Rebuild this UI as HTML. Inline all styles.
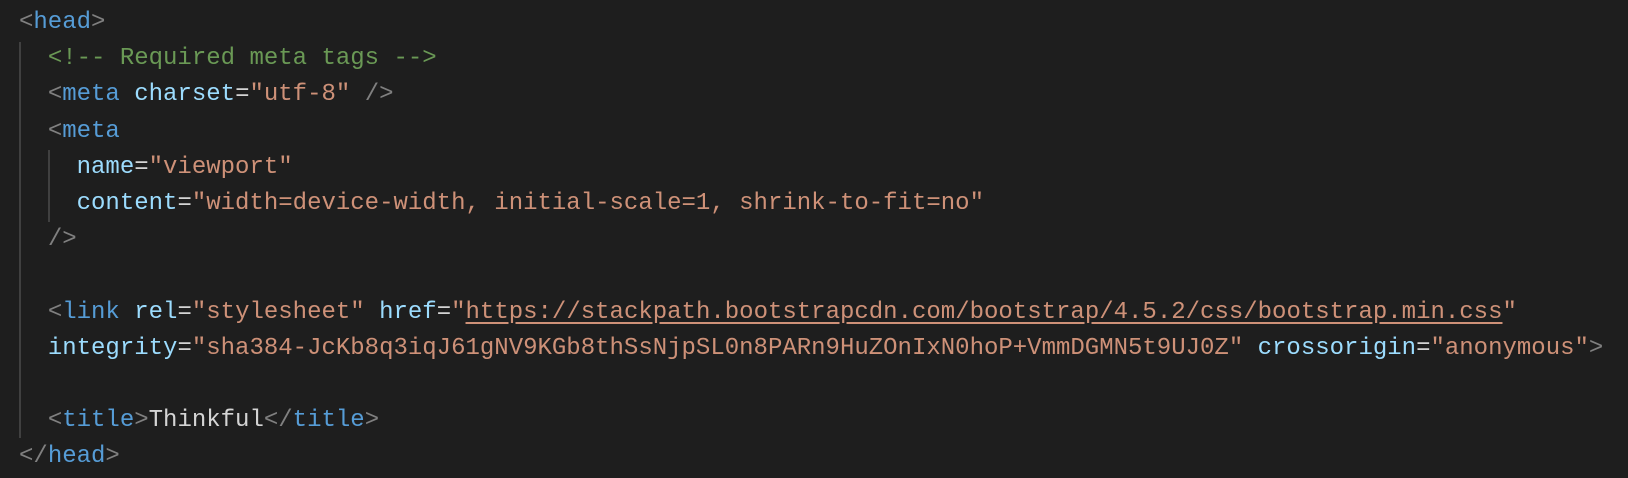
<!DOCTYPE html>
<html><head><meta charset="utf-8"><style>
html,body{margin:0;padding:0;background:#1e1e1e;width:1628px;height:478px;overflow:hidden}
pre{margin:0;padding:5px 0 0 19px;font-family:"Liberation Mono",monospace;font-size:24px;line-height:36.2px;color:#d4d4d4;position:relative}
.p{color:#808080}.t{color:#569cd6}.a{color:#9cdcfe}.s{color:#ce9178}.c{color:#6a9955}.u{text-decoration:underline;text-underline-offset:4px}
.g{position:absolute;width:2px;background:#404040}
</style></head><body>
<div class="g" style="left:19px;top:42px;height:396px"></div>
<div class="g" style="left:48px;top:150px;height:72px"></div>
<pre><span class="p">&lt;</span><span class="t">head</span><span class="p">&gt;</span>
  <span class="c">&lt;!-- Required meta tags --&gt;</span>
  <span class="p">&lt;</span><span class="t">meta</span> <span class="a">charset</span>=<span class="s">"utf-8"</span> <span class="p">/&gt;</span>
  <span class="p">&lt;</span><span class="t">meta</span>
    <span class="a">name</span>=<span class="s">"viewport"</span>
    <span class="a">content</span>=<span class="s">"width=device-width, initial-scale=1, shrink-to-fit=no"</span>
  <span class="p">/&gt;</span>

  <span class="p">&lt;</span><span class="t">link</span> <span class="a">rel</span>=<span class="s">"stylesheet"</span> <span class="a">href</span>=<span class="s">"<span class="u">https://stackpath.bootstrapcdn.com/bootstrap/4.5.2/css/bootstrap.min.css</span>"</span>
  <span class="a">integrity</span>=<span class="s">"sha384-JcKb8q3iqJ61gNV9KGb8thSsNjpSL0n8PARn9HuZOnIxN0hoP+VmmDGMN5t9UJ0Z"</span> <span class="a">crossorigin</span>=<span class="s">"anonymous"</span><span class="p">&gt;</span>

  <span class="p">&lt;</span><span class="t">title</span><span class="p">&gt;</span>Thinkful<span class="p">&lt;/</span><span class="t">title</span><span class="p">&gt;</span>
<span class="p">&lt;/</span><span class="t">head</span><span class="p">&gt;</span></pre>
</body></html>
